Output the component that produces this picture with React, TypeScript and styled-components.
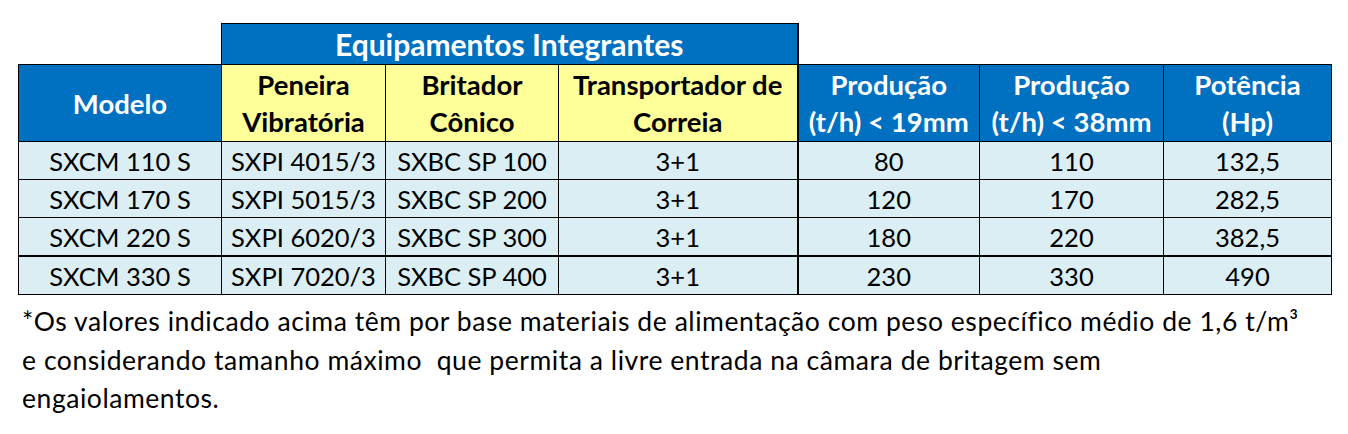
import React from "react";
import styled, { createGlobalStyle } from "styled-components";

const Global = createGlobalStyle`
  html, body { margin: 0; padding: 0; background: #ffffff; }
  body { font-family: Lato, "Open Sans", sans-serif; color: #000; }
`;

const Page = styled.div`
  padding: 23px 0 0 18px;
  width: 1330px;
`;

const Table = styled.table`
  border-collapse: collapse;
  table-layout: fixed;
  width: 1313px;
`;

const Blank = styled.th`
  border: none;
  background: transparent;
  padding: 0;
`;

const GroupHead = styled.th`
  background: #0070c0;
  color: #ffffff;
  border: 1px solid #000;
  border-right-width: 2px;
  height: 40px;
  padding: 0;
  font-size: 30px;
  font-weight: 700;
  line-height: 36px;
  text-align: center;
  vertical-align: middle;
`;

const Head = styled.th<{ $tone: "blue" | "yellow"; $thick?: boolean }>`
  background: ${(p) => (p.$tone === "blue" ? "#0070c0" : "#ffff99")};
  color: ${(p) => (p.$tone === "blue" ? "#ffffff" : "#000000")};
  border: 1px solid #000;
  border-right-width: ${(p) => (p.$thick ? "2px" : "1px")};
  height: 76px;
  padding: 0;
  font-size: 27.5px;
  font-weight: 700;
  line-height: 37px;
  text-align: center;
  vertical-align: middle;
  white-space: nowrap;
`;

const Row = styled.tr<{ $thickTop?: boolean }>`
  & > td {
    border-top-width: ${(p) => (p.$thickTop ? "2px" : "1px")};
  }
`;

const Cell = styled.td<{ $thick?: boolean }>`
  background: #daeef3;
  border: 1px solid #000;
  border-right-width: ${(p) => (p.$thick ? "2px" : "1px")};
  height: 37px;
  padding: 0;
  font-size: 25.5px;
  line-height: 30px;
  font-weight: 400;
  text-align: center;
  vertical-align: middle;
  white-space: nowrap;
`;

const Note = styled.p`
  margin: 7px 0 0 4px;
  font-size: 26.5px;
  letter-spacing: 0.55px;
  line-height: 38.5px;
  white-space: pre-wrap;
`;

const widths = [203, 164, 173, 239, 182, 184, 168];

const rows = [
  ["SXCM 110 S", "SXPI 4015/3", "SXBC SP 100", "3+1", "80", "110", "132,5"],
  ["SXCM 170 S", "SXPI 5015/3", "SXBC SP 200", "3+1", "120", "170", "282,5"],
  ["SXCM 220 S", "SXPI 6020/3", "SXBC SP 300", "3+1", "180", "220", "382,5"],
  ["SXCM 330 S", "SXPI 7020/3", "SXBC SP 400", "3+1", "230", "330", "490"],
];

export default function App() {
  return (
    <>
      <Global />
      <Page>
        <Table>
          <colgroup>
            {widths.map((w, i) => (
              <col key={i} style={{ width: w }} />
            ))}
          </colgroup>
          <thead>
            <tr>
              <Blank />
              <GroupHead colSpan={3}>Equipamentos Integrantes</GroupHead>
              <Blank colSpan={3} />
            </tr>
            <tr>
              <Head $tone="blue">Modelo</Head>
              <Head $tone="yellow">
                Peneira
                <br />
                Vibratória
              </Head>
              <Head $tone="yellow">
                Britador
                <br />
                Cônico
              </Head>
              <Head $tone="yellow" $thick>
                Transportador de
                <br />
                Correia
              </Head>
              <Head $tone="blue">
                Produção
                <br />
                (t/h) &lt; 19mm
              </Head>
              <Head $tone="blue">
                Produção
                <br />
                (t/h) &lt; 38mm
              </Head>
              <Head $tone="blue">
                Potência
                <br />
                (Hp)
              </Head>
            </tr>
          </thead>
          <tbody>
            {rows.map((r, i) => (
              <Row key={i} $thickTop={i === 3}>
                {r.map((c, j) => (
                  <Cell key={j} $thick={j === 3}>
                    {c}
                  </Cell>
                ))}
              </Row>
            ))}
          </tbody>
        </Table>
        <Note>
          {"*Os valores indicado acima têm por base materiais de alimentação com peso específico médio de 1,6 t/m³\ne considerando tamanho máximo  que permita a livre entrada na câmara de britagem sem\nengaiolamentos."}
        </Note>
      </Page>
    </>
  );
}
